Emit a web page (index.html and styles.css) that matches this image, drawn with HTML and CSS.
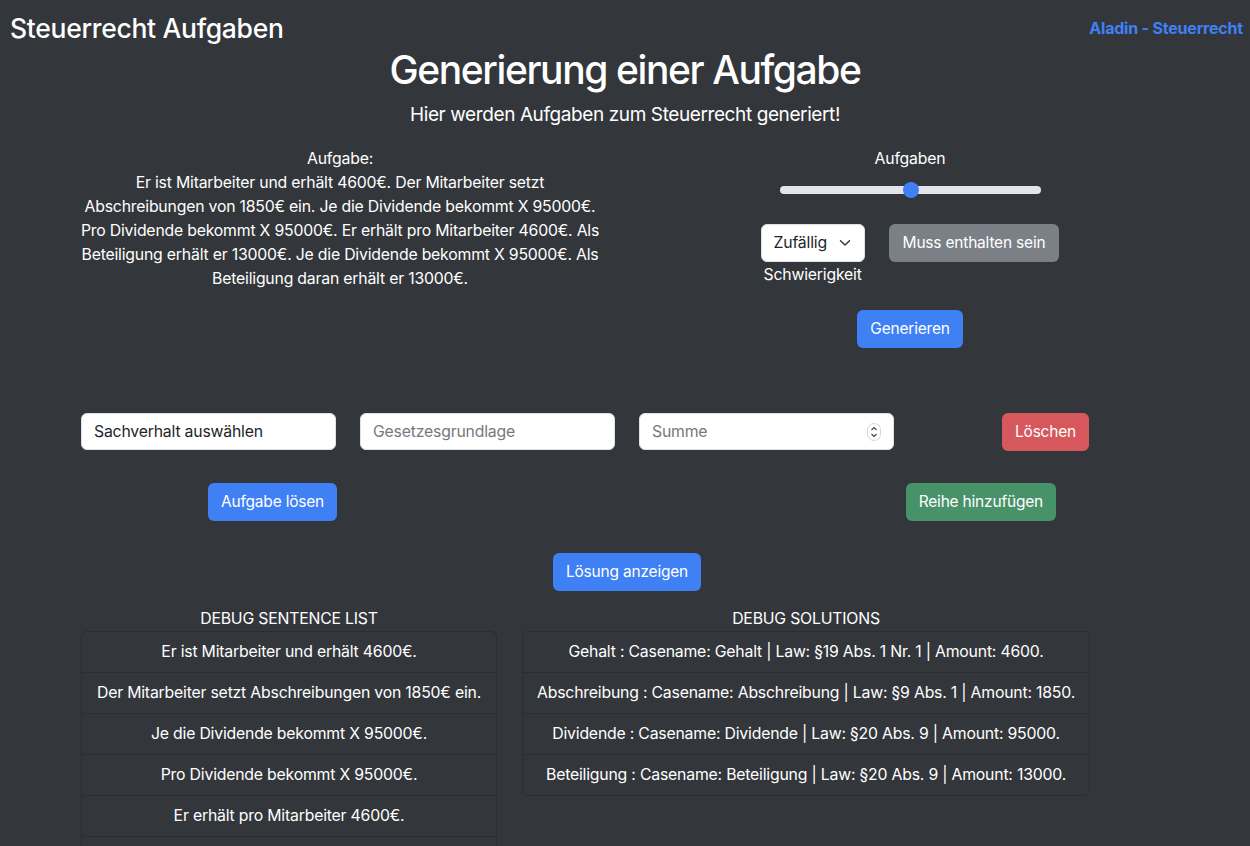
FILE: index.html
```html
<!DOCTYPE html>
<html lang="de">
<head>
<meta charset="utf-8">
<title>Steuerrecht Aufgaben</title>
<link rel="stylesheet" href="styles.css">
</head>
<body>
<header class="topbar">
  <div class="brand">Steuerrecht Aufgaben</div>
  <a class="toplink" href="#">Aladin - Steuerrecht</a>
</header>
<main>
  <h1 class="title">Generierung einer Aufgabe</h1>
  <p class="lead">Hier werden Aufgaben zum Steuerrecht generiert!</p>

  <section class="gen">
    <div class="taskwrap">
      <div class="task">
        <div>Aufgabe:</div>
        <div>Er ist Mitarbeiter und erhält 4600€. Der Mitarbeiter setzt Abschreibungen von 1850€ ein. Je die Dividende bekommt X 95000€. Pro Dividende bekommt X 95000€. Er erhält pro Mitarbeiter 4600€. Als Beteiligung erhält er 13000€. Je die Dividende bekommt X 95000€. Als Beteiligung daran erhält er 13000€.</div>
      </div>
    </div>
    <div class="controls">
      <div class="label">Aufgaben</div>
      <div class="range"><div class="track"></div><div class="thumb"></div></div>
      <div class="opts">
        <div class="selcol">
          <div class="select">Zufällig
            <svg class="chev" width="12" height="8" viewBox="0 0 12 8"><path d="M1.5 1.8 L6 6 L10.5 1.8" fill="none" stroke="#333" stroke-width="1.4" stroke-linecap="round" stroke-linejoin="round"/></svg>
          </div>
          <div class="label sublabel">Schwierigkeit</div>
        </div>
        <button class="btn btn-secondary">Muss enthalten sein</button>
      </div>
      <button class="btn btn-primary gen-btn">Generieren</button>
    </div>
  </section>

  <section class="inputs">
    <div class="field">Sachverhalt auswählen</div>
    <div class="field placeholder">Gesetzesgrundlage</div>
    <div class="field placeholder">Summe
      <span class="spinner"><svg width="10" height="16" viewBox="0 0 10 16"><path d="M2.5 6 L5 3.5 L7.5 6" fill="none" stroke="#444" stroke-width="1.2"/><path d="M2.5 10 L5 12.5 L7.5 10" fill="none" stroke="#444" stroke-width="1.2"/></svg></span>
    </div>
    <div class="cell"><button class="btn btn-danger">Löschen</button></div>
  </section>

  <section class="actions">
    <button class="btn btn-primary">Aufgabe lösen</button>
    <button class="btn btn-success">Reihe hinzufügen</button>
  </section>

  <div class="center"><button class="btn btn-primary">Lösung anzeigen</button></div>

  <section class="debug">
    <div class="dcol left">
      <div class="dhead">DEBUG SENTENCE LIST</div>
      <ul class="list">
        <li>Er ist Mitarbeiter und erhält 4600€.</li>
        <li>Der Mitarbeiter setzt Abschreibungen von 1850€ ein.</li>
        <li>Je die Dividende bekommt X 95000€.</li>
        <li>Pro Dividende bekommt X 95000€.</li>
        <li>Er erhält pro Mitarbeiter 4600€.</li>
        <li>Als Beteiligung erhält er 13000€.</li>
      </ul>
    </div>
    <div class="dcol right">
      <div class="dhead">DEBUG SOLUTIONS</div>
      <ul class="list">
        <li>Gehalt : Casename: Gehalt | Law: §19 Abs. 1 Nr. 1 | Amount: 4600.</li>
        <li>Abschreibung : Casename: Abschreibung | Law: §9 Abs. 1 | Amount: 1850.</li>
        <li>Dividende : Casename: Dividende | Law: §20 Abs. 9 | Amount: 95000.</li>
        <li>Beteiligung : Casename: Beteiligung | Law: §20 Abs. 9 | Amount: 13000.</li>
      </ul>
    </div>
  </section>
</main>
</body>
</html>
```
FILE: styles.css
```css
html, body {
  margin: 0;
  background: #33363b;
  color: #ffffff;
  font-family: Inter, "Noto Sans", sans-serif;
  font-size: 15.8px;
  line-height: 24px;
  letter-spacing: -0.2px;
  overflow: hidden;
}
.topbar {
  display: flex;
  justify-content: space-between;
  align-items: center;
  padding: 10px 7px 0 10px;
  height: 36px;
}
.brand {
  font-size: 26.5px;
  font-weight: 500;
  letter-spacing: -0.3px;
}
.toplink {
  color: #3f80f5;
  font-weight: 700;
  text-decoration: none;
  font-size: 16px;
  letter-spacing: -0.2px;
}
main {
  display: flex;
  flex-direction: column;
}
.title {
  margin: 0;
  text-align: center;
  font-size: 39px;
  font-weight: 500;
  line-height: 48px;
  letter-spacing: -1.4px;
}
.lead {
  margin: 6px 0 0;
  text-align: center;
  font-size: 19px;
  line-height: 30px;
  letter-spacing: -0.4px;
}
.gen {
  width: 1140px;
  margin: 17px auto 0;
  display: grid;
  grid-template-columns: 1fr 1fr;
}
.taskwrap {
  display: flex;
  justify-content: center;
}
.task {
  width: 525px;
  text-align: center;
}
.controls {
  display: flex;
  flex-direction: column;
  align-items: center;
  text-align: center;
}
.range {
  position: relative;
  width: 261px;
  height: 16px;
  margin-top: 11px;
  display: flex;
  align-items: center;
}
.track {
  width: 100%;
  height: 8px;
  border-radius: 4px;
  background: #e3e5e9;
}
.thumb {
  position: absolute;
  left: 123px;
  top: 0;
  width: 16px;
  height: 16px;
  border-radius: 50%;
  background: #3f80f5;
}
.opts {
  display: flex;
  gap: 24px;
  align-items: flex-start;
  margin-top: 26px;
}
.selcol {
  display: flex;
  flex-direction: column;
  align-items: center;
}
.sublabel { margin-top: 1px; }
.select {
  width: 104px;
  height: 38px;
  box-sizing: border-box;
  background: #fff;
  color: #212529;
  border-radius: 6px;
  border: 1px solid #dee2e6;
  padding: 6px 12px;
  text-align: left;
  position: relative;
}
.chev {
  position: absolute;
  right: 13px;
  top: 14px;
}
.btn {
  font-family: inherit;
  font-size: 15.5px;
  line-height: 24px;
  letter-spacing: -0.2px;
  color: #fff;
  border: none;
  border-radius: 6px;
  padding: 7px 13px;
  height: 38px;
  cursor: pointer;
}
.btn-primary { background: #3f80f5; }
.btn-secondary { background: #7b8087; padding: 7px 14px; }
.btn-danger { background: #d7585c; }
.btn-success { background: #48926a; }
.gen-btn { margin-top: 23px; }
.inputs {
  display: grid;
  grid-template-columns: repeat(4, 255px);
  column-gap: 24px;
  padding-left: 81px;
  margin-top: 65px;
}
.field {
  height: 37px;
  box-sizing: border-box;
  background: #fff;
  color: #212529;
  border: 1px solid #dee2e6;
  border-radius: 6px;
  padding: 6px 12px;
  position: relative;
}
.placeholder { color: #75797e; }
.spinner {
  position: absolute;
  right: 12px;
  top: 9px;
  width: 14px;
  height: 18px;
  border: 1px solid #d5d7da;
  border-radius: 7px;
  display: flex;
  align-items: center;
  justify-content: center;
  box-sizing: border-box;
}
.cell {
  display: flex;
  justify-content: center;
}
.actions {
  display: flex;
  justify-content: space-between;
  padding: 0 194px 0 208px;
  margin-top: 32px;
}
.center {
  display: flex;
  justify-content: center;
  padding-left: 4px;
  margin-top: 32px;
}
.debug {
  display: flex;
  gap: 25px;
  padding-left: 81px;
  margin-top: 16px;
}
.dcol.left { width: 416px; }
.dcol.right { width: 568px; }
.dhead {
  text-align: center;
}
.list {
  list-style: none;
  margin: 0;
  padding: 0;
  border: 1px solid #2a2d31;
  border-radius: 6px;
  overflow: hidden;
}
.list li {
  text-align: center;
  padding: 8px 12px;
  border-top: 1px solid #2a2d31;
  background: #33363b;
}
.list li:first-child { border-top: none; }
```
